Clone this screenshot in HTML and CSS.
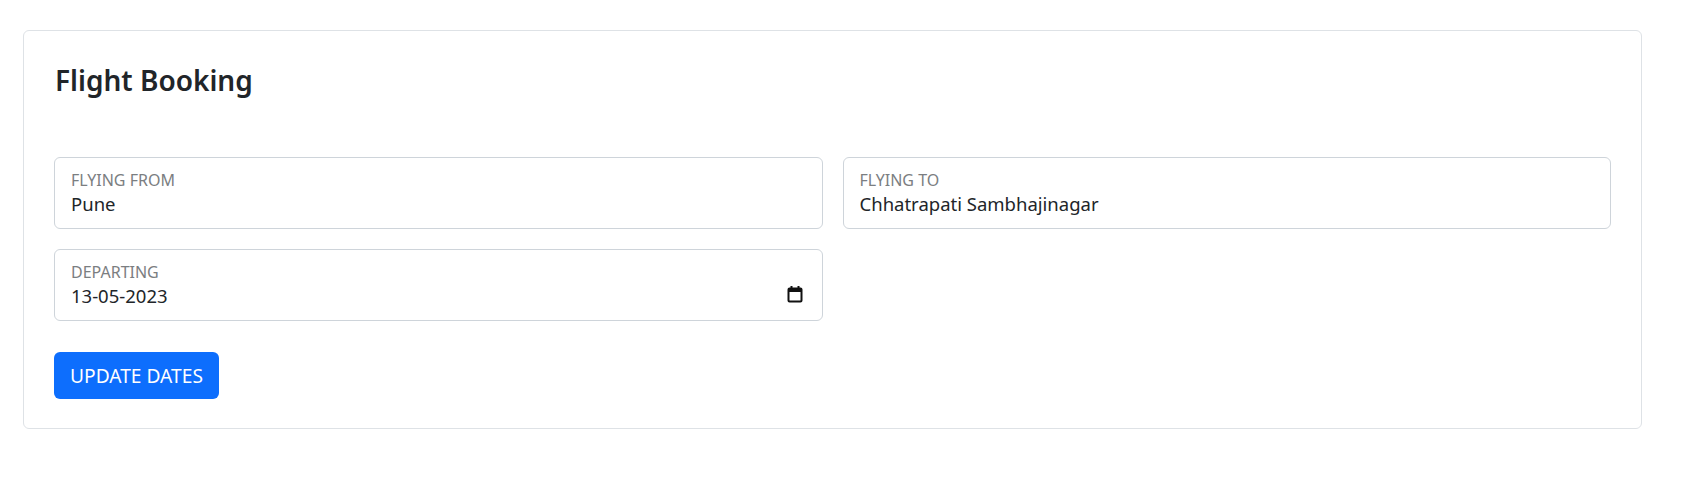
FILE: index.html
```html
<!DOCTYPE html>
<html lang="en">
<head>
<meta charset="utf-8">
<title>Flight Booking</title>
<link rel="stylesheet" href="styles.css">
</head>
<body>
<div class="page">
  <section class="card">
    <h1 class="card-title">Flight Booking</h1>
    <form class="booking-form">
      <div class="fields">
        <label class="field">
          <span class="field-label">FLYING FROM</span>
          <input class="field-input" type="text" value="Pune">
        </label>
        <label class="field">
          <span class="field-label">FLYING TO</span>
          <input class="field-input" type="text" value="Chhatrapati Sambhajinagar">
        </label>
        <label class="field field-date">
          <span class="field-label">DEPARTING</span>
          <input class="field-input" type="text" value="13-05-2023">
          <svg class="cal-icon" width="16" height="18" viewBox="0 0 16 18" aria-hidden="true">
            <rect x="1.5" y="3.5" width="13" height="13" rx="1" fill="none" stroke="#111" stroke-width="2"/>
            <rect x="1" y="3" width="14" height="4" fill="#111"/>
            <rect x="3.5" y="1" width="2" height="3" fill="#111"/>
            <rect x="10.5" y="1" width="2" height="3" fill="#111"/>
          </svg>
        </label>
      </div>
      <button class="btn-primary" type="button">UPDATE DATES</button>
    </form>
  </section>
</div>
</body>
</html>
```

FILE: styles.css
```css
* { box-sizing: border-box; }

html, body {
  margin: 0;
  padding: 0;
  background: #ffffff;
}

body {
  font-family: "Noto Sans", "Open Sans", sans-serif;
  color: #212529;
}

.page {
  padding: 30px 65px 0 23px;
}

.card {
  border: 1px solid #dee2e6;
  border-radius: 6px;
  padding: 30px 30px 29px 30px;
  background: #fff;
}

.card-title {
  margin: 2px 0 59px 1px;
  font-size: 28px;
  font-weight: 600;
  line-height: 35px;
  color: #212529;
}

.fields {
  display: grid;
  grid-template-columns: 1fr 1fr;
  column-gap: 20px;
  row-gap: 20px;
}

.field {
  position: relative;
  display: flex;
  flex-direction: column;
  height: 72px;
  border: 1px solid #ced4da;
  border-radius: 6px;
  padding: 12px 16px 0 16px;
  background: #fff;
}

.field-label {
  font-size: 16px;
  line-height: 20px;
  color: #7b7e81;
}

.field-input {
  border: 0;
  outline: none;
  padding: 0;
  margin: 1px 0 0 0;
  font-family: inherit;
  font-size: 18.5px;
  line-height: 26px;
  height: 26px;
  color: #212529;
  background: transparent;
}

.cal-icon {
  position: absolute;
  right: 19px;
  top: 35px;
}

.btn-primary {
  display: block;
  margin-top: 31px;
  height: 47px;
  padding: 0 16px;
  border: 0;
  border-radius: 6px;
  background: #0d6efd;
  color: #fff;
  font-family: inherit;
  font-size: 19.2px;
  line-height: 1;
}
```
